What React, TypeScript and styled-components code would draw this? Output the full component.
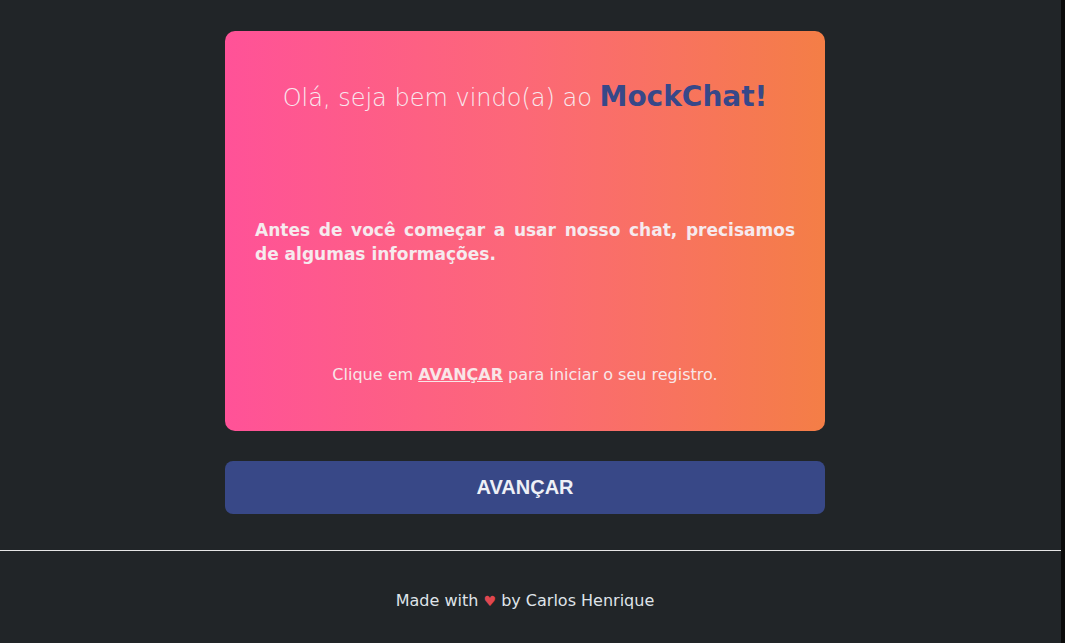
import React from "react";
import styled, { createGlobalStyle } from "styled-components";

const Global = createGlobalStyle`
  html, body { margin: 0; padding: 0; background: #212528; }
  body { font-family: "DejaVu Sans", "Noto Sans", sans-serif; }
  * { box-sizing: border-box; }
`;

const Page = styled.div`
  min-height: 643px;
  background: #212528;
  border-right: 4px solid #0b0b0b;
  display: flex;
  flex-direction: column;
`;

const Main = styled.main`
  width: 1050px;
  display: flex;
  flex-direction: column;
  align-items: center;
  padding: 31px 0 36px;
  gap: 30px;
`;

const Card = styled.section`
  width: 600px;
  height: 400px;
  border-radius: 10px;
  background: linear-gradient(90deg, #ff5298 0%, #fc6877 50%, #f47e46 100%);
  padding: 46px 30px;
  display: flex;
  flex-direction: column;
  justify-content: space-between;
  color: #f6ecee;
`;

const Title = styled.h1`
  margin: 0;
  text-align: center;
  font-weight: 300;
  font-size: 24px;
  line-height: 40px;
  color: #f8e8ee;
`;

const Brand = styled.strong`
  font-weight: 700;
  font-size: 28px;
  color: #374889;
`;

const Lead = styled.p`
  margin: 0;
  font-weight: 700;
  font-size: 17px;
  line-height: 24px;
  text-align: justify;
  color: #f6eaee;
`;

const Hint = styled.p`
  margin: 0;
  text-align: center;
  font-size: 16px;
  line-height: 20px;
  color: #f8e6e8;
`;

const HintStrong = styled.strong`
  text-decoration: underline;
`;

const Button = styled.button`
  width: 600px;
  height: 53px;
  border: none;
  border-radius: 8px;
  background: #384887;
  color: #eef0f6;
  font-family: "Liberation Sans", Arial, sans-serif;
  font-weight: 700;
  font-size: 20px;
  cursor: pointer;
`;

const Rule = styled.hr`
  margin: 0;
  border: none;
  border-top: 1px solid #e6e6e6;
`;

const Footer = styled.footer`
  width: 1050px;
  padding: 40px 0;
  text-align: center;
  font-size: 16px;
  line-height: 20px;
  color: #dfe3e8;
`;

const Heart = styled.span`
  color: #e0474f;
  font-size: 14px;
`;

export default function App() {
  return (
    <Page>
      <Global />
      <Main>
        <Card>
          <Title>
            Olá, seja bem vindo(a) ao <Brand>MockChat!</Brand>
          </Title>
          <Lead>
            Antes de você começar a usar nosso chat, precisamos de algumas informações.
          </Lead>
          <Hint>
            Clique em <HintStrong>AVANÇAR</HintStrong> para iniciar o seu registro.
          </Hint>
        </Card>
        <Button>AVANÇAR</Button>
      </Main>
      <Rule />
      <Footer>
        Made with <Heart>♥</Heart> by Carlos Henrique
      </Footer>
    </Page>
  );
}
